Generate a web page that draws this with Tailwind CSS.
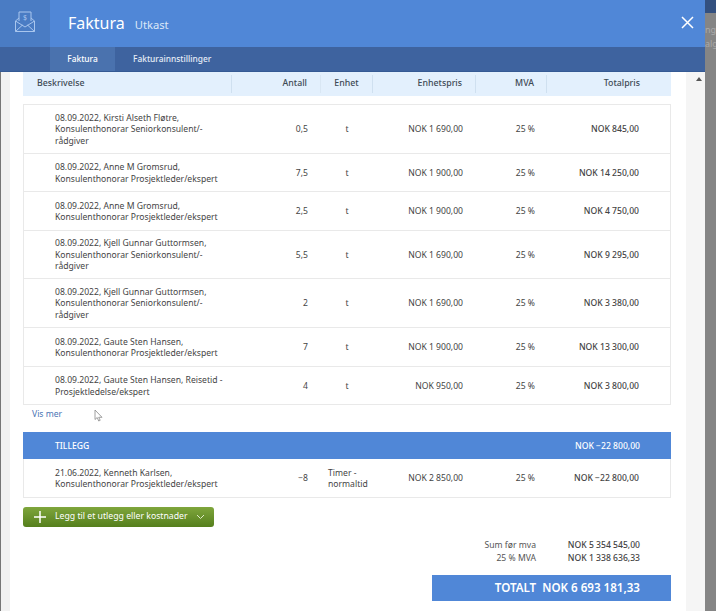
<!DOCTYPE html>
<html><head><meta charset="utf-8"><script src="https://cdn.jsdelivr.net/npm/@tailwindcss/browser@4"></script></head>
<body class="m-0 overflow-hidden">
<div class="flex w-[716px] h-[611px] overflow-hidden bg-[#6e6e6e] font-['Noto_Sans',sans-serif] text-[8.6px] text-[#444]">
<div class="relative w-[705px] shrink-0 h-[611px] flex flex-col bg-white">
  <div class="flex h-[47px] bg-[#5087d7] text-white shrink-0">
    <div class="w-[50px] flex items-center justify-center bg-[#4a7cc4] pb-[3px]">
      <svg width="22" height="22" viewBox="0 0 22 22" fill="none" stroke="#a9c6ee" stroke-width="1"><path d="M5 10V1h12v9"/><path d="M1.500 10 5 7M20.500 10 17 7"/><path d="M1.500 10v10.500h19V10l-9.500 6z"/><path d="M1.500 20.500l7-6.500M20.500 20.500l-7-6.500"/><text x="11" y="9" font-size="7" text-anchor="middle" fill="#a9c6ee" stroke="none">$</text></svg>
    </div>
    <div class="flex items-baseline pl-[18px] pt-[11px]">
      <span class="text-[16px] leading-[24px]">Faktura</span><span class="ml-[10px] text-[11.2px] text-[#dce8f8]">Utkast</span>
    </div>
    <div class="ml-auto pr-[11px] pt-[16px]"><svg width="13" height="13" viewBox="0 0 13 13" stroke="white" stroke-width="1.500"><path d="M1 1l11 11M12 1 1 12"/></svg></div>
  </div>
  <div class="flex h-[25px] bg-[#3e639f] text-[8.4px] font-medium text-white shrink-0 border-b border-[#355a94]">
    <div class="w-[65px] ml-[50px] flex items-center justify-center bg-[#4a72ae]">Faktura</div>
    <div class="ml-[18px] flex items-center text-[#e6edf7]">Fakturainnstillinger</div>
  </div>
  <div class="flex-1 flex">
    <div class="w-[10px] bg-[#f2f2f2] border-l border-[#777]"></div>
    <div class="w-[676px] pl-[13px] flex flex-col">
      <div class="grid grid-cols-[209px_89px_52px_103px_71px_124px] h-[24px] bg-[#e3f0fd] w-[648px] items-center font-medium text-[#3e4a55] text-[8.8px]">
        <div class="pl-[14px] h-[18px] flex items-center border-r border-[#cfe0f0]">Beskrivelse</div>
        <div class="pr-[13px] h-[18px] flex items-center justify-end border-r border-[#d9e7f4]">Antall</div>
        <div class="flex h-[18px] items-center justify-center border-r border-[#cfe0f0]">Enhet</div>
        <div class="pr-[13px] h-[18px] flex items-center justify-end border-r border-[#cfe0f0]">Enhetspris</div>
        <div class="pr-[12px] h-[18px] flex items-center justify-end border-r border-[#cfe0f0]">MVA</div>
        <div class="pr-[31px] flex items-center justify-end">Totalpris</div>
      </div>
      <div class="w-[648px] border-x border-b border-[#e9e9e9] mt-[8px]">
        <div class="border-t border-[#e9e9e9] h-[49px] pt-[2px] grid grid-cols-[208px_89px_52px_103px_71px_123px] items-center leading-[11.5px]"><div class="pl-[31px]">08.09.2022, Kirsti Alseth Fløtre,<br>Konsulenthonorar Seniorkonsulent/-<br>rådgiver</div><div class="text-right pr-[13px]">0,5</div><div class="text-center">t</div><div class="text-right pr-[13px]">NOK 1 690,00</div><div class="text-right pr-[12px]">25 %</div><div class="text-right pr-[31px] font-medium">NOK 845,00</div></div>
        <div class="border-t border-[#e9e9e9] h-[38px] pt-[2px] grid grid-cols-[208px_89px_52px_103px_71px_123px] items-center leading-[11.5px]"><div class="pl-[31px]">08.09.2022, Anne M Gromsrud,<br>Konsulenthonorar Prosjektleder/ekspert</div><div class="text-right pr-[13px]">7,5</div><div class="text-center">t</div><div class="text-right pr-[13px]">NOK 1 900,00</div><div class="text-right pr-[12px]">25 %</div><div class="text-right pr-[31px] font-medium">NOK 14 250,00</div></div>
        <div class="border-t border-[#e9e9e9] h-[39px] pt-[2px] grid grid-cols-[208px_89px_52px_103px_71px_123px] items-center leading-[11.5px]"><div class="pl-[31px]">08.09.2022, Anne M Gromsrud,<br>Konsulenthonorar Prosjektleder/ekspert</div><div class="text-right pr-[13px]">2,5</div><div class="text-center">t</div><div class="text-right pr-[13px]">NOK 1 900,00</div><div class="text-right pr-[12px]">25 %</div><div class="text-right pr-[31px] font-medium">NOK 4 750,00</div></div>
        <div class="border-t border-[#e9e9e9] h-[48px] pt-[2px] grid grid-cols-[208px_89px_52px_103px_71px_123px] items-center leading-[11.5px]"><div class="pl-[31px]">08.09.2022, Kjell Gunnar Guttormsen,<br>Konsulenthonorar Seniorkonsulent/-<br>rådgiver</div><div class="text-right pr-[13px]">5,5</div><div class="text-center">t</div><div class="text-right pr-[13px]">NOK 1 690,00</div><div class="text-right pr-[12px]">25 %</div><div class="text-right pr-[31px] font-medium">NOK 9 295,00</div></div>
        <div class="border-t border-[#e9e9e9] h-[49px] pt-[2px] grid grid-cols-[208px_89px_52px_103px_71px_123px] items-center leading-[11.5px]"><div class="pl-[31px]">08.09.2022, Kjell Gunnar Guttormsen,<br>Konsulenthonorar Seniorkonsulent/-<br>rådgiver</div><div class="text-right pr-[13px]">2</div><div class="text-center">t</div><div class="text-right pr-[13px]">NOK 1 690,00</div><div class="text-right pr-[12px]">25 %</div><div class="text-right pr-[31px] font-medium">NOK 3 380,00</div></div>
        <div class="border-t border-[#e9e9e9] h-[39px] pt-[2px] grid grid-cols-[208px_89px_52px_103px_71px_123px] items-center leading-[11.5px]"><div class="pl-[31px]">08.09.2022, Gaute Sten Hansen,<br>Konsulenthonorar Prosjektleder/ekspert</div><div class="text-right pr-[13px]">7</div><div class="text-center">t</div><div class="text-right pr-[13px]">NOK 1 900,00</div><div class="text-right pr-[12px]">25 %</div><div class="text-right pr-[31px] font-medium">NOK 13 300,00</div></div>
        <div class="border-t border-[#e9e9e9] h-[38px] pt-[2px] grid grid-cols-[208px_89px_52px_103px_71px_123px] items-center leading-[11.5px]"><div class="pl-[31px]">08.09.2022, Gaute Sten Hansen, Reisetid -<br>Prosjektledelse/ekspert</div><div class="text-right pr-[13px]">4</div><div class="text-center">t</div><div class="text-right pr-[13px]">NOK 950,00</div><div class="text-right pr-[12px]">25 %</div><div class="text-right pr-[31px] font-medium">NOK 3 800,00</div></div>
      </div>
      <div class="relative pl-[9px] mt-[3px] h-[12px] leading-[12px] text-[#4a74b4]">Vis mer
        <svg class="absolute left-[71px] top-[1px]" width="9" height="13" viewBox="0 0 9 13" fill="white" stroke="#888" stroke-width="0.800"><path d="M1 1v9.500l2.200-2 1.500 3.500 1.500-.7L4.700 8.300H8z"/></svg>
      </div>
      <div class="w-[648px] mt-[12px] h-[27px] pt-[2px] bg-[#5087d7] text-white font-medium flex items-center justify-between pl-[32px] pr-[31px]"><span>TILLEGG</span><span>NOK −22 800,00</span></div>
      <div class="w-[648px] border-x border-b border-[#e9e9e9] h-[39px] pt-[2px] grid grid-cols-[208px_89px_52px_103px_71px_123px] items-center leading-[11.5px]"><div class="pl-[31px]">21.06.2022, Kenneth Karlsen,<br>Konsulenthonorar Prosjektleder/ekspert</div><div class="text-right pr-[13px]">−8</div><div class="pl-[7px]">Timer -<br>normaltid</div><div class="text-right pr-[13px]">NOK 2 850,00</div><div class="text-right pr-[12px]">25 %</div><div class="text-right pr-[31px] font-medium">NOK −22 800,00</div></div>
      <div class="mt-[9px] w-[191px] h-[20px] rounded-[3px] bg-gradient-to-b from-[#7fa63c] to-[#557f1c] text-white flex items-center pl-[11px]">
        <svg width="12" height="12" viewBox="0 0 12 12" stroke="white" stroke-width="1.500"><path d="M6 0v12M0 6h12"/></svg>
        <span class="ml-[9px] text-[8.7px] whitespace-nowrap">Legg til et utlegg eller kostnader</span>
        <svg class="ml-[8px]" width="9" height="6" viewBox="0 0 9 6" fill="none" stroke="#dfe9c9"><path d="M1 1l3.500 3.500L8 1"/></svg>
      </div>
      <div class="w-[648px] mt-[12px] grid grid-cols-[1fr_104px] pr-[31px] leading-[13px] text-right">
        <div class="text-[#555]">Sum før mva</div><div class="font-medium">NOK 5 354 545,00</div>
        <div class="text-[#555]">25 % MVA</div><div class="font-medium">NOK 1 338 636,33</div>
      </div>
      <div class="self-start ml-[409px] mt-[10px] w-[239px] h-[26px] bg-[#5087d7] text-white text-[11.600px] font-semibold flex items-center justify-end pr-[31px] whitespace-nowrap">TOTALT&nbsp; NOK 6 693 181,33</div>
    </div>
    <div class="w-[19px] bg-[#f5f5f5] flex justify-end pr-[3px] pt-[5px]"><svg width="6" height="4" viewBox="0 0 6 4"><path d="M3 0l3 4H0z" fill="#555"/></svg></div>
  </div>
</div>
<div class="flex-1 flex flex-col overflow-hidden bg-[#858585] text-[#aaa] text-[9px] leading-[14px] whitespace-nowrap">
  <div class="h-[13px] bg-[#33507f] shrink-0"></div>
  <div class="h-[10px] shrink-0"></div>
  <div>ng</div>
  <div>alg</div>
</div>
</div>
</body></html>
